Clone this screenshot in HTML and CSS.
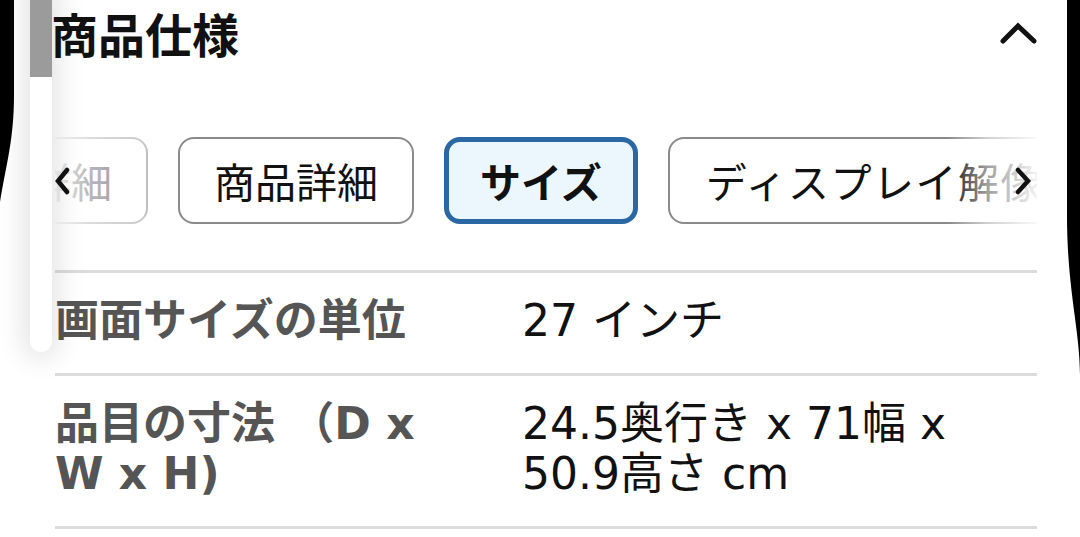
FILE: index.html
```html
<!DOCTYPE html>
<html lang="ja">
<head>
<meta charset="utf-8">
<title>商品仕様</title>
<link rel="stylesheet" href="styles.css">
</head>
<body>
<div class="screen">
  <section class="specs">
    <header class="specs-head">
      <h2 class="specs-title">商品仕様</h2>
      <svg class="chev-up" width="40" height="30" viewBox="0 0 40 30" aria-hidden="true">
        <polyline points="4,24 19,9 35,24" fill="none" stroke="#111" stroke-width="5" stroke-linecap="round" stroke-linejoin="miter"/>
      </svg>
    </header>

    <div class="tabs">
      <div class="tab-strip">
        <button class="tab">技術詳細</button>
        <button class="tab">商品詳細</button>
        <button class="tab tab-active">サイズ</button>
        <button class="tab tab-wide">ディスプレイ解像度</button>
      </div>
      <div class="fade fade-left">
        <svg class="tab-chev" width="16" height="28" viewBox="0 0 16 28" aria-hidden="true">
          <polyline points="12,3 3,14 12,25" fill="none" stroke="#111" stroke-width="4.5" stroke-linecap="round"/>
        </svg>
      </div>
      <div class="fade fade-right">
        <svg class="tab-chev" width="18" height="28" viewBox="0 0 18 28" aria-hidden="true">
          <polyline points="4,3 14,14 4,25" fill="none" stroke="#111" stroke-width="4.5" stroke-linecap="round"/>
        </svg>
      </div>
    </div>

    <div class="spec-table">
      <div class="spec-row">
        <div class="spec-label">画面サイズの単位</div>
        <div class="spec-value">27 インチ</div>
      </div>
      <div class="spec-row">
        <div class="spec-label">品目の寸法 （D x W x H)</div>
        <div class="spec-value">24.5奥行き x 71幅 x 50.9高さ cm</div>
      </div>
    </div>
  </section>

  <div class="scroll-indicator"><div class="scroll-thumb"></div></div>

  <svg class="bezel" width="1080" height="537" viewBox="0 0 1080 537" aria-hidden="true">
    <path d="M0 0 L14 0 L14 95 C14 140 6 165 0 202 Z" fill="#000"/>
    <path d="M1080 0 L1067 0 L1067 215 C1067 290 1080 330 1080 375 Z" fill="#000"/>
  </svg>
</div>
</body>
</html>
```

FILE: styles.css
```css
* {
  box-sizing: border-box;
}

html, body {
  margin: 0;
  padding: 0;
  background: #fff;
}

.screen {
  position: relative;
  width: 1080px;
  height: 537px;
  overflow: hidden;
  background: #fff;
  font-family: "DejaVu Sans", "Noto Sans CJK JP", sans-serif;
  color: #111;
}

.specs {
  padding: 0 43px 0 55px;
}

.specs-head {
  height: 80px;
  display: flex;
  align-items: flex-start;
  justify-content: space-between;
  padding-top: 9px;
}

.specs-title {
  margin: 0 0 0 -4px;
  font-family: "Noto Sans CJK JP", sans-serif;
  font-weight: 700;
  font-size: 47px;
  line-height: 48px;
  color: #111;
}

.chev-up {
  margin-top: 8px;
  margin-right: -2px;
}

.tabs {
  position: relative;
  margin-top: 57px;
  height: 87px;
  overflow: hidden;
}

.tab-strip {
  display: flex;
  gap: 30px;
  margin-left: -143px;
  width: max-content;
}

.tab {
  flex: none;
  height: 87px;
  padding: 0 34px;
  border: 2px solid #8a8a8a;
  border-radius: 16px;
  background: #fff;
  font-family: "Noto Sans CJK JP", sans-serif;
  font-size: 41px;
  line-height: 1;
  font-weight: 400;
  color: #111;
  display: flex;
  align-items: center;
  white-space: nowrap;
}

.tab-wide {
  padding-left: 36px;
  letter-spacing: 1.5px;
}

.tab-active {
  padding: 0 31px;
  border: 5px solid #2a67a3;
  background: #ebf6fd;
  font-weight: 700;
}

.fade {
  position: absolute;
  top: 0;
  bottom: 0;
  display: flex;
  align-items: center;
}

.fade-left {
  left: 0;
  width: 110px;
  background: linear-gradient(to right, rgba(255,255,255,0.95) 0%, rgba(255,255,255,0.7) 30%, rgba(255,255,255,0.55) 80%, rgba(255,255,255,0) 100%);
}

.fade-right {
  right: 0;
  width: 90px;
  justify-content: flex-end;
  padding-right: 5px;
  background: linear-gradient(to right, rgba(255,255,255,0) 0%, rgba(255,255,255,0.6) 45%, rgba(255,255,255,0.95) 100%);
}

.spec-table {
  margin-top: 46px;
}

.spec-row {
  display: grid;
  grid-template-columns: 385px 1fr;
  column-gap: 82px;
  border-top: 3px solid #dcdcdc;
  padding: 23px 0 27px;
  font-size: 44px;
  line-height: 50px;
}

.spec-row:last-child {
  border-bottom: 3px solid #dcdcdc;
}

.spec-label {
  font-weight: 700;
  color: #555;
}

.spec-value {
  font-weight: 400;
  color: #111;
}

.scroll-indicator {
  position: absolute;
  left: 30px;
  top: -12px;
  width: 22px;
  height: 364px;
  background: #fff;
  border-radius: 0 0 11px 11px;
  box-shadow: 0 0 26px 8px rgba(0,0,0,0.10);
  overflow: hidden;
}

.scroll-thumb {
  height: 89px;
  background: #9b9b9b;
}

.bezel {
  position: absolute;
  left: 0;
  top: 0;
  pointer-events: none;
}
```
